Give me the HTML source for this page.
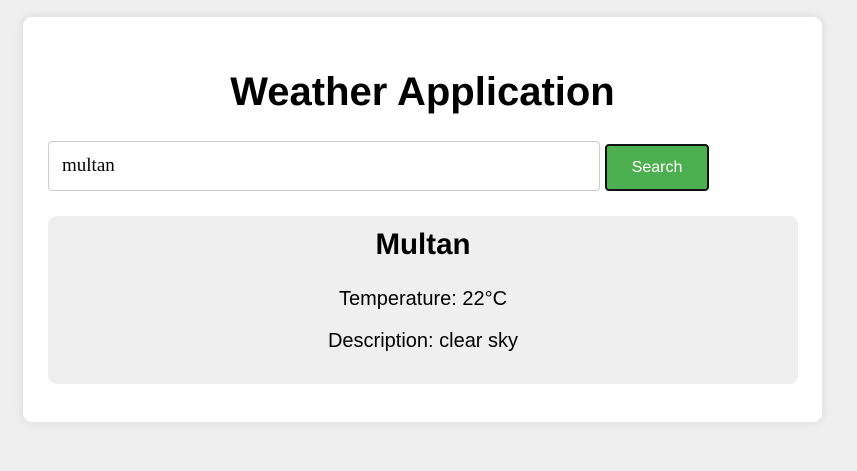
<!DOCTYPE html>
<html><head><style>
html,body{margin:0;padding:0;background:#efefef;width:857px;height:471px;overflow:hidden;font-family:"Liberation Sans",Arial,sans-serif;}
.card{position:absolute;left:23px;top:17px;width:799px;height:405px;background:#fff;border-radius:9px;box-shadow:0 0 10px rgba(0,0,0,0.1);}
h1{position:absolute;left:0;width:799px;top:52px;margin:0;text-align:center;font-size:40px;line-height:46px;font-weight:bold;color:#000;}
.inp{position:absolute;left:25px;top:124px;border:1px solid #ccc;border-radius:4px;font-family:"Liberation Serif",serif;font-size:19px;line-height:48px;padding-left:13px;box-sizing:border-box;width:552px;height:50px;}
.btn{position:absolute;left:582px;top:127px;width:104px;height:47px;box-sizing:border-box;background:#4caf50;border:2px solid #111;border-radius:4px;color:#fff;font-size:16px;text-align:center;line-height:43px;}
.res{position:absolute;left:25px;top:199px;width:750px;height:168px;background:#efefef;border-radius:9px;text-align:center;}
.res h2{margin:0;position:absolute;top:12px;width:100%;font-size:29.5px;line-height:34px;}
.res p{margin:0;position:absolute;width:100%;font-size:20px;line-height:22px;}
</style></head><body>
<div class="card">
<h1>Weather Application</h1>
<div class="inp">multan</div>
<div class="btn">Search</div>
<div class="res">
<h2>Multan</h2>
<p style="top:72px">Temperature: 22°C</p>
<p style="top:114px">Description: clear sky</p>
</div>
</div>
</body></html>
